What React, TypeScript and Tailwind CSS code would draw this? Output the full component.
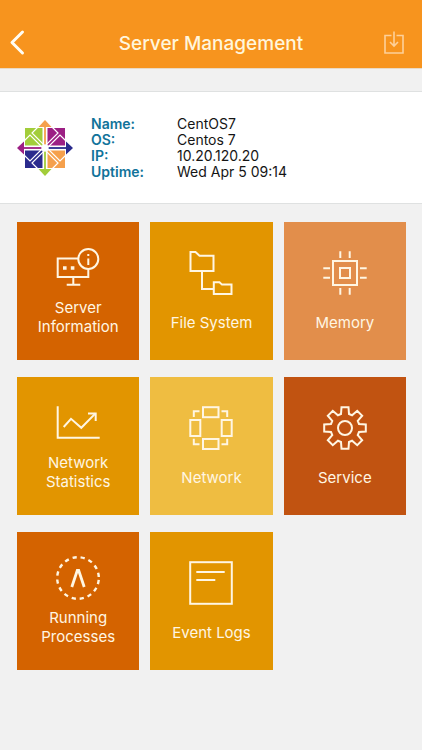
import type { ReactNode } from 'react';

interface Tile {
  id: string;
  lines: string[];
  color: string;
  icon: ReactNode;
}

const details = [
  { label: 'Name:', value: 'CentOS7' },
  { label: 'OS:', value: 'Centos 7' },
  { label: 'IP:', value: '10.20.120.20' },
  { label: 'Uptime:', value: 'Wed Apr 5 09:14' },
];

const gearPoints = Array.from({ length: 8 }, (_, i) => {
  const a = (i * Math.PI) / 4;
  return [[-4, -14], [-3.5, -20.8], [3.5, -20.8], [4, -14]]
    .map(([x, y]) => {
      const px = 22 + x * Math.cos(a) - y * Math.sin(a);
      const py = 22 + x * Math.sin(a) + y * Math.cos(a);
      return `${px.toFixed(2)},${py.toFixed(2)}`;
    })
    .join(' ');
}).join(' ');

const tiles: Tile[] = [
  {
    id: 'server-information',
    lines: ['Server', 'Information'],
    color: 'bg-[#d46300]',
    icon: (
      <>
        <path d="M22 12.5H1.7V31H32.3V23.5" />
        <circle cx="32.3" cy="13" r="10" />
        <path d="M17.3 31v7.7M10.7 38.7h13.6M32.3 12.5v6.5" />
        <path d="M7 22h3.6M14.8 22h3.6" strokeWidth={3.4} />
        <path d="M31.3 9h2" />
      </>
    ),
  },
  {
    id: 'file-system',
    lines: ['File System'],
    color: 'bg-[#e29500]',
    icon: (
      <>
        <path d="M1.5 1H6.5L10.5 4.7H24.5V20H1.5Z" />
        <path d="M13 20V38H24.8" />
        <path d="M24.8 31.2H30.5L33 33.6H42.5V43H24.8Z" />
      </>
    ),
  },
  {
    id: 'memory',
    lines: ['Memory'],
    color: 'bg-[#e28e4b]',
    icon: (
      <>
        <rect x="10" y="10" width="24" height="24" />
        <rect x="17" y="17" width="10" height="10" />
        <path d="M17.3 .3V7M26.7 .3V7M17.3 37V43.7M26.7 37V43.7M.3 17.3H7M.3 26.7H7M37 17.3H43.7M37 26.7H43.7" />
      </>
    ),
  },
  {
    id: 'network-statistics',
    lines: ['Network', 'Statistics'],
    color: 'bg-[#e29500]',
    icon: (
      <>
        <path d="M1.7 5.3V36.7H43.7" />
        <path d="M7.7 26L15 17.8L25.3 26.8L39.5 12.4" />
        <path d="M32 12.4H39.7V20" />
      </>
    ),
  },
  {
    id: 'network',
    lines: ['Network'],
    color: 'bg-[#efbd41]',
    icon: (
      <>
        <rect x="14" y="1.2" width="15.5" height="10" />
        <rect x="14" y="33" width="15.5" height="10" />
        <rect x="1.3" y="14" width="10" height="16" />
        <rect x="32.7" y="14" width="10" height="16" />
        <path d="M4.8 11V5.2H10.5M32.5 5.2H38.2V11M4.8 32.7V38.3H10.5M32.5 38.3H38.2V32.7" />
      </>
    ),
  },
  {
    id: 'service',
    lines: ['Service'],
    color: 'bg-[#c15311]',
    icon: (
      <>
        <polygon points={gearPoints} />
        <circle cx="22" cy="22" r="7" />
      </>
    ),
  },
  {
    id: 'running-processes',
    lines: ['Running', 'Processes'],
    color: 'bg-[#d46300]',
    icon: (
      <>
        <circle cx="22" cy="22" r="20.8" strokeWidth={2.4} strokeDasharray="4.2 3.97" strokeDashoffset="-2" />
        <path d="M15.8 31L21.3 14.5H22.7L28.2 31" strokeWidth={2.8} />
      </>
    ),
  },
  {
    id: 'event-logs',
    lines: ['Event Logs'],
    color: 'bg-[#e29500]',
    icon: (
      <>
        <rect x="1.2" y="1.2" width="41.6" height="41.6" />
        <path d="M7.3 11H35.7M7.3 19H26.3" />
      </>
    ),
  },
];

function CentosLogo() {
  return (
    <svg viewBox="-29 -29 58 58" className="w-[58px] h-[58px] shrink-0" role="img" aria-label="CentOS">
      <path d="M0-28L6.5-21H-6.5Z" fill="#f5a04c" />
      <path d="M28 0L21 6.5V-6.5Z" fill="#2a2b8d" />
      <path d="M0 28L6.5 21H-6.5Z" fill="#a2cd3a" />
      <path d="M-28 0L-21 6.5V-6.5Z" fill="#9c1f84" />
      <rect x="-20" y="-20" width="20" height="20" fill="#a2cd3a" />
      <rect width="20" height="20" y="-20" fill="#9c1f84" />
      <rect width="20" height="20" x="-20" fill="#2a2b8d" />
      <rect width="20" height="20" fill="#f5a04c" />
      {/* white seams between the quadrants */}
      <path d="M0-20.5V20.5M-20.5 0H20.5" stroke="#fff" strokeWidth="5" />
      <path d="M0-22V0" stroke="#f5a04c" strokeWidth="1.8" />
      <path d="M0 0H22" stroke="#2a2b8d" strokeWidth="1.8" />
      <path d="M0 0V22" stroke="#a2cd3a" strokeWidth="1.8" />
      <path d="M0 0H-22" stroke="#9c1f84" strokeWidth="1.8" />
      {[0, 90, 180, 270].map(deg => (
        <path
          key={deg}
          d="M-7-21L-13-15L0-2L13-15L7-21"
          transform={`rotate(${deg})`}
          stroke="#fff"
          strokeWidth="1.2"
          fill="none"
        />
      ))}
      <circle r="3.5" fill="#fff" />
    </svg>
  );
}

export default function App() {
  return (
    <div className="min-h-screen bg-[#f1f1f1] font-['Inter','Liberation_Sans',sans-serif]">
      {/* Header */}
      <header className="flex items-end justify-between bg-[#f7941e] px-3 pt-7 pb-2 border-b border-[#e9d9c4]">
        <button type="button" aria-label="Back" className="w-8 h-8 flex items-center">
          <svg viewBox="0 0 20 28" fill="none" stroke="#fffdf4" strokeWidth={3} strokeLinecap="round" strokeLinejoin="round" className="w-5 h-7 overflow-visible">
            <path d="M10.5 2L0 12.5L10.5 23" />
          </svg>
        </button>
        <h1 className="text-[19px] leading-8 font-medium text-[#fff6dc]">Server Management</h1>
        <button type="button" aria-label="Download" className="w-8 h-8 flex items-center justify-center">
          <svg viewBox="0 0 24 26" fill="none" stroke="#fdd09a" strokeWidth={1.6} className="w-6 h-[26px]">
            <path d="M9.5 4.5H3V22H21V4.5H14.5M12 .5V15M8 11L12 15L16 11" />
          </svg>
        </button>
      </header>

      {/* Server summary */}
      <section className="mt-[22px] flex items-center bg-white border-y border-[#dfe1e1] px-4 pt-6 pb-[23px]">
        <CentosLogo />
        <dl className="ml-[17px] text-sm leading-4">
          {details.map(row => (
            <div key={row.label} className="flex">
              <dt className="w-[86px] font-semibold text-[#11739a]">{row.label}</dt>
              <dd className="text-[#151515]">{row.value}</dd>
            </div>
          ))}
        </dl>
      </section>

      {/* Tiles */}
      <main className="grid grid-cols-3 gap-x-[11px] gap-y-[17px] pl-[17px] pr-4 pt-[18px] pb-20">
        {tiles.map(tile => (
          <button
            key={tile.id}
            type="button"
            className={`min-h-[138px] flex flex-col items-center justify-center text-[#fff6e3] ${tile.color} ${
              tile.lines.length > 1 ? 'gap-2' : 'gap-[18px]'
            }`}
          >
            <svg viewBox="0 0 44 44" fill="none" stroke="currentColor" strokeWidth={2} className="w-11 h-11 overflow-visible">
              {tile.icon}
            </svg>
            <span className="text-[15px] leading-[19px]">
              {tile.lines.map(line => (
                <span key={line} className="block">{line}</span>
              ))}
            </span>
          </button>
        ))}
      </main>
    </div>
  );
}
